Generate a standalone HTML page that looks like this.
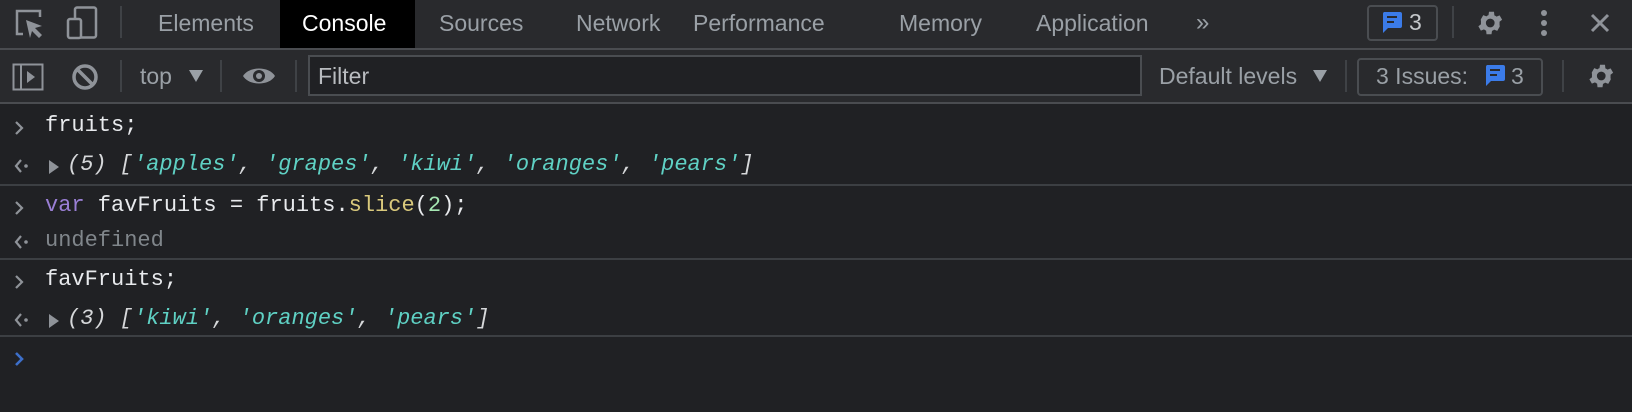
<!DOCTYPE html>
<html><head><meta charset="utf-8"><style>
*{margin:0;padding:0;box-sizing:border-box}
body{width:1632px;height:412px;background:#202124;position:relative;overflow:hidden;font-family:"Liberation Sans",sans-serif}
.a{position:absolute}
.tab{position:absolute;top:0;height:48px;line-height:46px;font-size:23px;color:#9aa0a6}
.mono{font-family:"Liberation Mono",monospace;font-size:22px;position:absolute;left:45px;color:#e8eaed;white-space:pre}
.s{color:#5fd1c4;font-style:italic}
.i{font-style:italic;color:#d6d8da}
.sep{position:absolute;width:2px;background:#3f4246}
.hl{position:absolute;left:0;width:1632px;height:2px;background:#3c3f43}
.pr{position:absolute;left:14px}
.t2{position:absolute;top:60px;font-size:23px;color:#9aa0a6;line-height:32px}
</style></head><body>
<div class="a" style="left:0;top:0;width:1632px;height:48px;background:#292a2d"></div>
<div class="a" style="left:0;top:48px;width:1632px;height:2px;background:#4a4c50"></div>
<div class="a" style="left:0;top:50px;width:1632px;height:52px;background:#292a2d"></div>
<div class="a" style="left:0;top:102px;width:1632px;height:2px;background:#4a4c50"></div>
<svg class="a" style="left:14px;top:8px" width="34" height="32" viewBox="0 0 34 32"><path d="M9 26H3V3h23v6" fill="none" stroke="#8f9399" stroke-width="2.5"/><path d="M12 12l16 6-7 2 7 7-3 3-7-7-2 7z" fill="#8f9399"/></svg>
<svg class="a" style="left:66px;top:6px" width="34" height="34" viewBox="0 0 34 34"><rect x="9" y="1.5" width="21" height="30" rx="2" fill="none" stroke="#8f9399" stroke-width="2.5"/><rect x="2" y="13" width="13" height="19" rx="2" fill="#292a2d" stroke="#8f9399" stroke-width="2.5"/></svg>
<div class="sep" style="left:120px;top:6px;height:32px"></div>
<div class="tab" style="left:158px">Elements</div>
<div class="a" style="left:280px;top:0;width:135px;height:48px;background:#000"></div>
<div class="tab" style="left:302px;color:#fff">Console</div>
<div class="tab" style="left:439px">Sources</div>
<div class="tab" style="left:576px">Network</div>
<div class="tab" style="left:693px">Performance</div>
<div class="tab" style="left:899px">Memory</div>
<div class="tab" style="left:1036px">Application</div>
<div class="tab" style="left:1196px;font-size:24px">»</div>
<div class="a" style="left:1367px;top:5px;width:71px;height:36px;border:2px solid #4a4d51;border-radius:4px"></div>
<svg class="a" style="left:1381px;top:11px" width="22" height="24" viewBox="0 0 22 24"><path d="M3 1h16a2 2 0 0 1 2 2v12a2 2 0 0 1-2 2H7l-5 5V3a2 2 0 0 1 1-2z" fill="#3b7be8"/><path d="M6 6h10M6 11h7" stroke="#292a2d" stroke-width="2"/></svg>
<div class="a" style="left:1409px;top:7px;font-size:23px;color:#c4c7ca;line-height:30px">3</div>
<div class="sep" style="left:1452px;top:6px;height:32px"></div>
<svg class="a" style="left:1474px;top:8px" width="30" height="30" viewBox="0 0 24 24"><path fill="#8f9399" d="M19.4 13a7.6 7.6 0 0 0 0-2l2.1-1.6-2-3.5-2.5 1a7 7 0 0 0-1.7-1L15 3h-4l-.4 2.7a7 7 0 0 0-1.7 1l-2.5-1-2 3.5L4.6 11a7.6 7.6 0 0 0 0 2l-2.1 1.6 2 3.5 2.5-1a7 7 0 0 0 1.7 1L9 21h4l.4-2.7a7 7 0 0 0 1.7-1l2.5 1 2-3.5zM12 15.5A3.5 3.5 0 1 1 12 8.5a3.5 3.5 0 0 1 0 7z" transform="translate(1 0)"/></svg>
<svg class="a" style="left:1537px;top:9px" width="14" height="30"><circle cx="7" cy="4" r="3" fill="#8f9399"/><circle cx="7" cy="14" r="3" fill="#8f9399"/><circle cx="7" cy="24" r="3" fill="#8f9399"/></svg>
<svg class="a" style="left:1589px;top:12px" width="22" height="22"><path d="M3 3l16 16M19 3L3 19" stroke="#8f9399" stroke-width="3"/></svg>
<svg class="a" style="left:12px;top:63px" width="32" height="28"><rect x="1.5" y="1.5" width="29" height="25" fill="none" stroke="#8f9399" stroke-width="2"/><path d="M9 2v24" stroke="#8f9399" stroke-width="2"/><path d="M15 8l8 6-8 6z" fill="#8f9399"/></svg>
<svg class="a" style="left:71px;top:63px" width="28" height="28"><circle cx="14" cy="14" r="11" fill="none" stroke="#8f9399" stroke-width="3.5"/><path d="M6.5 6.5l15 15" stroke="#8f9399" stroke-width="3.5"/></svg>
<div class="sep" style="left:120px;top:60px;height:32px"></div>
<div class="t2" style="left:140px">top</div>
<svg class="a" style="left:188px;top:69px" width="16" height="14"><path d="M1 1h14L8 13z" fill="#9aa0a6"/></svg>
<div class="sep" style="left:220px;top:60px;height:32px"></div>
<svg class="a" style="left:242px;top:65px" width="34" height="22"><path d="M1 11C7 1 27 1 33 11 27 21 7 21 1 11z" fill="#8f9399"/><circle cx="17" cy="11" r="6" fill="#292a2d"/><circle cx="17" cy="11" r="3" fill="#8f9399"/></svg>
<div class="sep" style="left:295px;top:60px;height:32px"></div>
<div class="a" style="left:308px;top:55px;width:834px;height:41px;border:2px solid #4a4d51;background:#202124"></div>
<div class="t2" style="left:318px;color:#b9bcc0">Filter</div>
<div class="t2" style="left:1159px">Default levels</div>
<svg class="a" style="left:1312px;top:69px" width="16" height="14"><path d="M1 1h14L8 13z" fill="#9aa0a6"/></svg>
<div class="sep" style="left:1345px;top:60px;height:32px"></div>
<div class="a" style="left:1357px;top:58px;width:186px;height:38px;border:2px solid #4a4d51;border-radius:4px"></div>
<div class="t2" style="left:1376px">3 Issues:</div>
<svg class="a" style="left:1484px;top:64px" width="22" height="24" viewBox="0 0 22 24"><path d="M3 1h16a2 2 0 0 1 2 2v12a2 2 0 0 1-2 2H7l-5 5V3a2 2 0 0 1 1-2z" fill="#3b7be8"/><path d="M6 6h10M6 11h7" stroke="#292a2d" stroke-width="2"/></svg>
<div class="t2" style="left:1511px">3</div>
<div class="sep" style="left:1562px;top:60px;height:32px"></div>
<svg class="a" style="left:1585px;top:61px" width="30" height="30" viewBox="0 0 24 24"><path fill="#8f9399" d="M19.4 13a7.6 7.6 0 0 0 0-2l2.1-1.6-2-3.5-2.5 1a7 7 0 0 0-1.7-1L15 3h-4l-.4 2.7a7 7 0 0 0-1.7 1l-2.5-1-2 3.5L4.6 11a7.6 7.6 0 0 0 0 2l-2.1 1.6 2 3.5 2.5-1a7 7 0 0 0 1.7 1L9 21h4l.4-2.7a7 7 0 0 0 1.7-1l2.5 1 2-3.5zM12 15.5A3.5 3.5 0 1 1 12 8.5a3.5 3.5 0 0 1 0 7z" transform="translate(1 0)"/></svg>
<svg class="pr" style="top:120px" width="12" height="16"><path d="M2 2l6 6-6 6" fill="none" stroke="#8f9399" stroke-width="2.2"/></svg>
<div class="mono" style="top:113px">fruits;</div>
<svg class="pr" style="top:159px" width="16" height="14"><path d="M7 1L2 7l5 6" fill="none" stroke="#8f9399" stroke-width="2.2"/><circle cx="12" cy="7" r="1.8" fill="#8f9399"/></svg>
<svg class="a" style="left:48px;top:159px" width="12" height="16"><path d="M1 1l10 7-10 7z" fill="#8f9399"/></svg>
<div class="mono" style="top:152px;left:67px"><span class="i">(5) [</span><span class="s">'apples'</span><span class="i">, </span><span class="s">'grapes'</span><span class="i">, </span><span class="s">'kiwi'</span><span class="i">, </span><span class="s">'oranges'</span><span class="i">, </span><span class="s">'pears'</span><span class="i">]</span></div>
<div class="hl" style="top:184px"></div>
<svg class="pr" style="top:200px" width="12" height="16"><path d="M2 2l6 6-6 6" fill="none" stroke="#8f9399" stroke-width="2.2"/></svg>
<div class="mono" style="top:193px"><span style="color:#9a7fd5">var</span> favFruits = fruits.<span style="color:#d9c97c">slice</span>(<span style="color:#a7e8b4">2</span>);</div>
<svg class="pr" style="top:235px" width="16" height="14"><path d="M7 1L2 7l5 6" fill="none" stroke="#8f9399" stroke-width="2.2"/><circle cx="12" cy="7" r="1.8" fill="#8f9399"/></svg>
<div class="mono" style="top:228px;color:#80868b">undefined</div>
<div class="hl" style="top:258px"></div>
<svg class="pr" style="top:274px" width="12" height="16"><path d="M2 2l6 6-6 6" fill="none" stroke="#8f9399" stroke-width="2.2"/></svg>
<div class="mono" style="top:267px">favFruits;</div>
<svg class="pr" style="top:313px" width="16" height="14"><path d="M7 1L2 7l5 6" fill="none" stroke="#8f9399" stroke-width="2.2"/><circle cx="12" cy="7" r="1.8" fill="#8f9399"/></svg>
<svg class="a" style="left:48px;top:313px" width="12" height="16"><path d="M1 1l10 7-10 7z" fill="#8f9399"/></svg>
<div class="mono" style="top:306px;left:67px"><span class="i">(3) [</span><span class="s">'kiwi'</span><span class="i">, </span><span class="s">'oranges'</span><span class="i">, </span><span class="s">'pears'</span><span class="i">]</span></div>
<div class="hl" style="top:335px"></div>
<svg class="pr" style="top:351px" width="12" height="16"><path d="M2 2l6 6-6 6" fill="none" stroke="#3d6fc9" stroke-width="2.6"/></svg>
</body></html>
